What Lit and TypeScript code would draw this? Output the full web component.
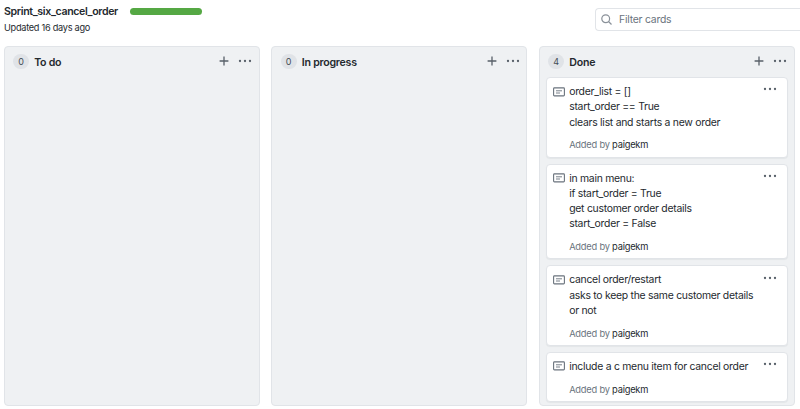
import { LitElement, html, css, svg } from "lit";
import { customElement, property } from "lit/decorators.js";

interface Card {
  lines: string[];
  author: string;
}

interface Column {
  title: string;
  cards: Card[];
}

const columns: Column[] = [
  { title: "To do", cards: [] },
  { title: "In progress", cards: [] },
  {
    title: "Done",
    cards: [
      { lines: ["order_list = []", "start_order == True", "clears list and starts a new order"], author: "paigekm" },
      { lines: ["in main menu:", "if start_order = True", "get customer order details", "start_order = False"], author: "paigekm" },
      { lines: ["cancel order/restart", "asks to keep the same customer details", "or not"], author: "paigekm" },
      { lines: ["include a c menu item for cancel order"], author: "paigekm" },
    ],
  },
];

const dots = html`<svg width="14" height="4" viewBox="0 0 14 4" fill="currentColor">
  ${[2, 7, 12].map((x) => svg`<circle cx=${x} cy="2" r="1.15"></circle>`)}
</svg>`;

const shared = css`
  :host {
    display: block;
    box-sizing: border-box;
    font-family: Inter, "Liberation Sans", sans-serif;
    color: #24292e;
  }
  * {
    box-sizing: border-box;
  }
  svg {
    display: block;
  }
`;

@customElement("note-card")
export class NoteCard extends LitElement {
  @property({ attribute: false }) card!: Card;

  static styles = [
    shared,
    css`
      :host {
        display: flex;
        align-items: flex-start;
        padding: 6px 7px 0 6.3px;
        background: #fff;
        border: 1px solid #e1e4e8;
        border-radius: 4px;
        box-shadow: 0 1px 1px rgba(27, 31, 35, 0.05);
        height: fit-content;
      }
      .note {
        margin: 2.6px 4.1px 0 0;
        color: #6a737d;
        flex: none;
      }
      .body {
        flex: 1;
        min-width: 0;
        white-space: nowrap;
      }
      .line {
        font-size: 10.4px;
        letter-spacing: -0.26px;
        line-height: 15.2px;
        height: 15.2px;
      }
      .meta {
        margin-top: 7.6px;
        font-size: 9.3px;
        letter-spacing: -0.22px;
        line-height: 15px;
        height: 19.2px;
        color: #6a737d;
      }
      .author {
        color: #24292e;
      }
      .menu {
        margin: 3.2px 3.5px 0 0;
        color: #586069;
        flex: none;
      }
    `,
  ];

  render() {
    return html`
      <svg class="note" width="12" height="10" viewBox="0 0 12 10" fill="none" stroke="currentColor">
        <rect x="0.6" y="0.9" width="10.8" height="8" rx="0.8" stroke-width="1.1"></rect>
        <path d="M3 3.8h6M3 6h4" stroke-width="0.9"></path>
      </svg>
      <div class="body">
        ${this.card.lines.map((l) => html`<div class="line"><span>${l}</span></div>`)}
        <div class="meta">Added by <span class="author">${this.card.author}</span></div>
      </div>
      <div class="menu">${dots}</div>
    `;
  }
}

@customElement("board-column")
export class BoardColumn extends LitElement {
  @property({ attribute: false }) column!: Column;

  static styles = [
    shared,
    css`
      :host {
        background: #eff1f3;
        border: 1px solid #e1e4e8;
        border-radius: 4px;
        padding: 0 5.5px 0 6px;
      }
      header {
        display: flex;
        align-items: center;
        height: 30.3px;
        padding: 0 1.2px 0 2.4px;
      }
      .count {
        width: 16px;
        height: 15px;
        margin-bottom: 1px;
        border-radius: 8px;
        background: #e0e3e7;
        color: #444d56;
        font-size: 9px;
        line-height: 15px;
        text-align: center;
      }
      h2 {
        flex: 1;
        margin: 0 0 0 5.2px;
        font-size: 10.6px;
        font-weight: 600;
        letter-spacing: -0.24px;
        line-height: 15px;
      }
      .icon {
        margin-bottom: 1.4px;
        color: #586069;
      }
      .icon + .icon {
        margin-left: 9px;
      }
      .cards {
        display: flex;
        flex-direction: column;
        gap: 6.1px;
      }
    `,
  ];

  render() {
    return html`
      <header>
        <span class="count">${this.column.cards.length}</span>
        <h2><span>${this.column.title}</span></h2>
        <svg class="icon" width="10" height="10" viewBox="0 0 10 10" stroke="currentColor" stroke-width="1.3">
          <path d="M5 .6v8.8M.6 5h8.8"></path>
        </svg>
        <span class="icon">${dots}</span>
      </header>
      <div class="cards">${this.column.cards.map((c) => html`<note-card .card=${c}></note-card>`)}</div>
    `;
  }
}

@customElement("app-root")
export class AppRoot extends LitElement {
  static styles = [
    shared,
    css`
      :host {
        height: 409px;
        overflow: hidden;
        background: #fff;
      }
      .top {
        display: flex;
        justify-content: space-between;
        height: 46px;
        padding-left: 4px;
      }
      .name {
        display: flex;
        align-items: center;
        height: 15px;
        margin-top: 4px;
      }
      h1 {
        width: 126px;
        margin: 0;
        font-size: 10.6px;
        font-weight: 600;
        letter-spacing: -0.35px;
        line-height: 15px;
      }
      .progress {
        width: 72px;
        height: 7px;
        border-radius: 4px;
        background: #55a844;
      }
      .updated {
        margin-top: 2px;
        font-size: 9.2px;
        letter-spacing: -0.28px;
        line-height: 14px;
      }
      .filter {
        display: flex;
        align-items: center;
        width: 205px;
        height: 23px;
        margin-top: 8px;
        padding-left: 5.4px;
        border: 1px solid #e1e4e8;
        border-right: 0;
        border-radius: 4px 0 0 4px;
        color: #6a737d;
        font-size: 10.4px;
        letter-spacing: -0.22px;
      }
      .filter svg {
        margin-right: 6.6px;
        color: #8a9199;
      }
      .board {
        display: grid;
        grid-template-columns: repeat(3, 256px);
        column-gap: 11.6px;
        height: 360px;
        padding-left: 3.6px;
      }
    `,
  ];

  render() {
    return html`
      <div class="top">
        <div>
          <div class="name">
            <h1><span>Sprint_six_cancel_order</span></h1>
            <div class="progress"></div>
          </div>
          <div class="updated"><span>Updated 16 days ago</span></div>
        </div>
        <div class="filter">
          <svg width="11" height="11" viewBox="0 0 11 11" fill="none" stroke="currentColor" stroke-width="1.2">
            <circle cx="4.7" cy="4.7" r="3.9"></circle>
            <path d="M7.5 7.5l3 3"></path>
          </svg>
          <span>Filter cards</span>
        </div>
      </div>
      <div class="board">${columns.map((c) => html`<board-column .column=${c}></board-column>`)}</div>
    `;
  }
}
